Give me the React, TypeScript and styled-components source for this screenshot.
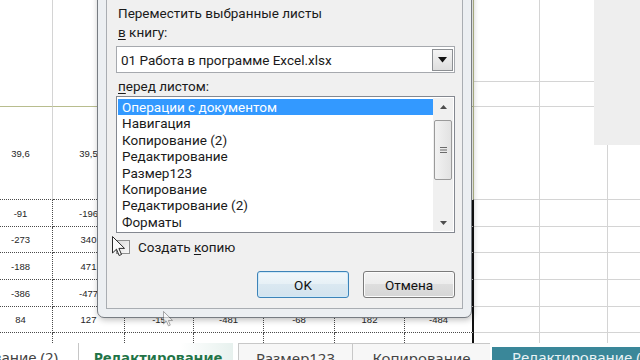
import React from "react";
import styled, { createGlobalStyle } from "styled-components";

type Line = "none" | "grid" | "olive" | "dots" | "page";

const COLS = [64, 72, 69, 70, 71, 70, 69, 66, 68, 72];
const ROWS = [82, 25, 93, 27, 26, 27, 27, 26, 10];

// cells under the dialog stay empty, as nothing of them shows
const VALUES: string[][] = [
    [],
    [],
    ["39,6", "39,5"],
    ["-91", "-196"],
    ["-273", "340"],
    ["-188", "471"],
    ["-386", "-477"],
    ["84", "127", "-15", "-481", "-68", "182", "-484"],
    [],
];

const SHEETS = [
    "Операции с документом",
    "Навигация",
    "Копирование (2)",
    "Редактирование",
    "Размер123",
    "Копирование",
    "Редактирование (2)",
    "Форматы",
];

const border = (l: Line) => {
    switch (l) {
        case "grid":
            return "1px solid #d4d4d4";
        case "olive":
            return "1px solid #b8bd8e";
        case "dots":
            return "1px dotted #4a4a4a";
        case "page":
            return "2px solid #111";
        default:
            return "0 none";
    }
};

// which lines a cell draws, by row and column
const cellLines = (r: number, c: number): { bottom: Line; right: Line } => {
    if (c > 6) return { bottom: r === 8 ? "none" : "grid", right: "grid" };
    if (r === 0) return { bottom: "none", right: c === 6 ? "olive" : "grid" };
    if (r === 1) return { bottom: "olive", right: c === 6 ? "olive" : "grid" };
    if (r === 2) return { bottom: "dots", right: c === 6 ? "olive" : "grid" };
    return { bottom: r === 8 ? "none" : "dots", right: c === 6 ? "page" : "dots" };
};

const App = () => {
    return (
        <Screen>
            <GlobalStyle />
            <Sheet>
                {ROWS.map((_, r) =>
                    COLS.map((_, c) => {
                        const { bottom, right } = cellLines(r, c);
                        return (
                            <Cell key={`${r}-${c}`} $bottom={bottom} $right={right}>
                                {VALUES[r][c] ?? ""}
                            </Cell>
                        );
                    })
                )}
            </Sheet>

            <TabBar>
                <Tab $kind="plain" $w={79} $align="end">
                    Копирование (2)
                </Tab>
                <Gap $w={4} />
                <Tab $kind="active" $w={150}>
                    Редактирование
                </Tab>
                <Gap $w={5} />
                <Tab $kind="gray" $w={114}>
                    Размер123
                </Tab>
                <Tab $kind="gray" $w={138}>
                    Копирование
                </Tab>
                <Gap $w={2} />
                <Tab $kind="teal" $w={160} $align="start">
                    Редактирование (2)
                </Tab>
            </TabBar>

            <SidePane />

            <Window>
                <Panel>
                    <Label>Переместить выбранные листы</Label>
                    <Label>
                        <u>в</u> книгу:
                    </Label>
                    <Combo>
                        <span>01 Работа в программе Excel.xlsx</span>
                        <DropButton>
                            <svg width="9" height="6" viewBox="0 0 9 6">
                                <path d="M0 0h9L4.5 5.5z" fill="#111" />
                            </svg>
                        </DropButton>
                    </Combo>
                    <Label>
                        <u>п</u>еред листом:
                    </Label>
                    <ListBox>
                        <Items>
                            {SHEETS.map((s, i) => (
                                <Item key={s} $selected={i === 0}>
                                    {s}
                                </Item>
                            ))}
                        </Items>
                        <ScrollBar>
                            <ScrollArrow>
                                <svg width="7" height="4" viewBox="0 0 7 4">
                                    <path d="M0 4L3.5 0L7 4z" fill="#4d4d4d" />
                                </svg>
                            </ScrollArrow>
                            <Thumb>
                                <svg width="7" height="6" viewBox="0 0 7 6">
                                    <path d="M0 .5h7M0 3h7M0 5.5h7" stroke="#6a6a6a" strokeWidth="1" />
                                </svg>
                            </Thumb>
                            <ScrollArrow>
                                <svg width="7" height="4" viewBox="0 0 7 4">
                                    <path d="M0 0L3.5 4L7 0z" fill="#4d4d4d" />
                                </svg>
                            </ScrollArrow>
                        </ScrollBar>
                    </ListBox>
                    <CheckRow>
                        <CheckBox />
                        <span>
                            Создать <u>к</u>опию
                        </span>
                    </CheckRow>
                    <Buttons>
                        <Button $focused>OK</Button>
                        <Button>Отмена</Button>
                    </Buttons>
                </Panel>
            </Window>

            <Pointer $x={112} $y={236} $fade={1}>
                <svg width="13" height="21" viewBox="0 0 13 21">
                    <path
                        d="M0.5 0.5v16.5l4-3.8 2.6 6.3 2.4-1-2.6-6.1h5.6z"
                        fill="#fafafa"
                        stroke="#2a2a2a"
                        strokeWidth="1"
                        strokeLinejoin="round"
                    />
                </svg>
            </Pointer>
            <Pointer $x={163} $y={311} $fade={0.55}>
                <svg width="10" height="16" viewBox="0 0 13 21">
                    <path
                        d="M0.5 0.5v16.5l4-3.8 2.6 6.3 2.4-1-2.6-6.1h5.6z"
                        fill="#ffffff"
                        stroke="#555"
                        strokeWidth="1.2"
                    />
                </svg>
            </Pointer>
        </Screen>
    );
};

export default App;

const GlobalStyle = createGlobalStyle`
    html, body {
        margin: 0;
        padding: 0;
        background: #ffffff;
    }
    body {
        width: 640px;
        height: 360px;
        overflow: hidden;
        font-family: "Noto Sans", "Open Sans", sans-serif;
    }
`;

const Screen = styled.div`
    position: relative;
    width: 640px;
    height: 360px;
    overflow: hidden;
    background: #fff;
`;

const Sheet = styled.div`
    display: grid;
    grid-template-columns: ${COLS.map((w) => `${w}px`).join(" ")};
    grid-template-rows: ${ROWS.map((h) => `${h}px`).join(" ")};
    margin-left: -11px;
    width: max-content;
`;

const Cell = styled.div<{ $bottom: Line; $right: Line }>`
    box-sizing: border-box;
    display: flex;
    align-items: center;
    justify-content: center;
    font-family: "Liberation Sans", Arial, sans-serif;
    font-size: 9.5px;
    color: #262626;
    border-bottom: ${(p) => border(p.$bottom)};
    border-right: ${(p) => border(p.$right)};
`;

const TabBar = styled.div`
    display: flex;
    height: 17px;
    overflow: hidden;
    background: #fff;
`;

const Gap = styled.div<{ $w: number }>`
    flex: none;
    width: ${(p) => p.$w}px;
`;

const Tab = styled.div<{
    $kind: "plain" | "active" | "gray" | "teal";
    $w: number;
    $align?: "end" | "start";
}>`
    box-sizing: border-box;
    flex: none;
    width: ${(p) => p.$w}px;
    display: flex;
    justify-content: ${(p) =>
        p.$align === "end" ? "flex-end" : p.$align === "start" ? "flex-start" : "center"};
    padding: 4px ${(p) => (p.$align === "end" ? "20px" : "0")} 0
        ${(p) => (p.$align === "start" ? "20px" : "0")};
    overflow: hidden;
    white-space: nowrap;
    font-size: 15px;
    line-height: 20px;
    color: #444;
    background: #fff;
    ${(p) => p.$kind === "plain" && "border-right: 1px solid #c6c6c6;"}
    ${(p) =>
        p.$kind === "active" &&
        `
        color: #217346;
        font-weight: 700;
        background: linear-gradient(to right, #ffffff 65%, #e7f1ee);
    `}
    ${(p) =>
        p.$kind === "gray" &&
        `
        background: #f7f7f7;
        border-top: 1px solid #c8c8c8;
        border-left: 1px solid #c8c8c8;
    `}
    ${(p) =>
        p.$kind === "teal" &&
        `
        background: #3a8799;
        color: #e9f3f5;
        margin-top: 4px;
        padding-top: 0;
    `}
`;

const SidePane = styled.div`
    position: absolute;
    left: 594px;
    top: 0;
    width: 46px;
    height: 145px;
    background: #eeeeee;
`;

const Window = styled.div`
    position: absolute;
    left: 97px;
    top: -20px;
    width: 375px;
    box-sizing: border-box;
    padding: 8px;
    border: 1px solid #777c82;
    border-radius: 0 0 7px 7px;
    background: #eceff2;
    box-shadow: 1px 2px 6px rgba(0, 0, 0, 0.25);
`;

const Panel = styled.div`
    display: flex;
    flex-direction: column;
    padding: 14px 7px 10px 9px;
    border: 1px solid #a9adb2;
    background: #f0f0f0;
    font-family: Roboto, "Noto Sans", sans-serif;
    font-size: 13.5px;
    color: #1a1a1a;

    u {
        text-underline-offset: 2px;
    }
`;

const Label = styled.div`
    height: 19px;
    line-height: 19px;
    white-space: nowrap;
    padding-left: 2px;
`;

const Combo = styled.div`
    box-sizing: border-box;
    display: flex;
    align-items: center;
    justify-content: space-between;
    height: 27px;
    margin: 4px 0;
    padding: 0 1px 0 4px;
    border: 1px solid #a6a9ae;
    background: #fff;
    white-space: nowrap;
`;

const DropButton = styled.div`
    box-sizing: border-box;
    width: 21px;
    height: 22px;
    display: flex;
    align-items: center;
    justify-content: center;
    border: 1px solid #8c8f93;
    background: linear-gradient(#f4f4f4, #dedede);
`;

const ListBox = styled.div`
    box-sizing: border-box;
    display: flex;
    height: 137px;
    padding: 1px;
    border: 1px solid #848890;
    background: #fff;
`;

const Items = styled.div`
    flex: 1;
    padding-top: 1px;
`;

const Item = styled.div<{ $selected?: boolean }>`
    height: 16.4px;
    line-height: 16.4px;
    padding-left: 4px;
    white-space: nowrap;
    color: ${(p) => (p.$selected ? "#fff" : "#1a1a1a")};
    background: ${(p) => (p.$selected ? "#3399ff" : "transparent")};
`;

const ScrollBar = styled.div`
    width: 20px;
    display: flex;
    flex-direction: column;
    align-items: center;
    justify-content: space-between;
    background: #f0f0f0;
`;

const ScrollArrow = styled.div`
    height: 17px;
    display: flex;
    align-items: center;
    justify-content: center;
`;

const Thumb = styled.div`
    box-sizing: border-box;
    width: 18px;
    height: 60px;
    margin-bottom: 30px;
    display: flex;
    align-items: center;
    justify-content: center;
    border: 1px solid #9a9a9a;
    border-radius: 2px;
    background: linear-gradient(to right, #f2f2f2, #e2e2e2);
`;

const CheckRow = styled.div`
    display: flex;
    align-items: center;
    gap: 8px;
    height: 19px;
    margin-top: 4px;
    white-space: nowrap;
`;

const CheckBox = styled.div`
    box-sizing: border-box;
    width: 14px;
    height: 14px;
    border: 1px solid #8e8f8f;
    background: linear-gradient(135deg, #dcdcdc, #f8f8f8);
`;

const Buttons = styled.div`
    display: flex;
    justify-content: flex-end;
    gap: 14px;
    margin-top: 15px;
`;

const Button = styled.div<{ $focused?: boolean }>`
    box-sizing: border-box;
    width: 92px;
    height: 27px;
    display: flex;
    align-items: center;
    justify-content: center;
    border-radius: 3px;
    border: 1px solid ${(p) => (p.$focused ? "#3d83b8" : "#7a7a7a")};
    box-shadow: inset 0 0 0 1px ${(p) => (p.$focused ? "#cfe9f8" : "#fbfbfb")};
    background: ${(p) =>
        p.$focused
            ? "linear-gradient(#f1f7fb, #e6f0f6 50%, #dae8f1 50%, #d3e3ee)"
            : "linear-gradient(#f3f3f3, #ececec 50%, #dedede 50%, #d6d6d6)"};
    color: #111;
`;

const Pointer = styled.div<{ $x: number; $y: number; $fade: number }>`
    position: absolute;
    left: ${(p) => p.$x}px;
    top: ${(p) => p.$y}px;
    opacity: ${(p) => p.$fade};
    line-height: 0;
`;
